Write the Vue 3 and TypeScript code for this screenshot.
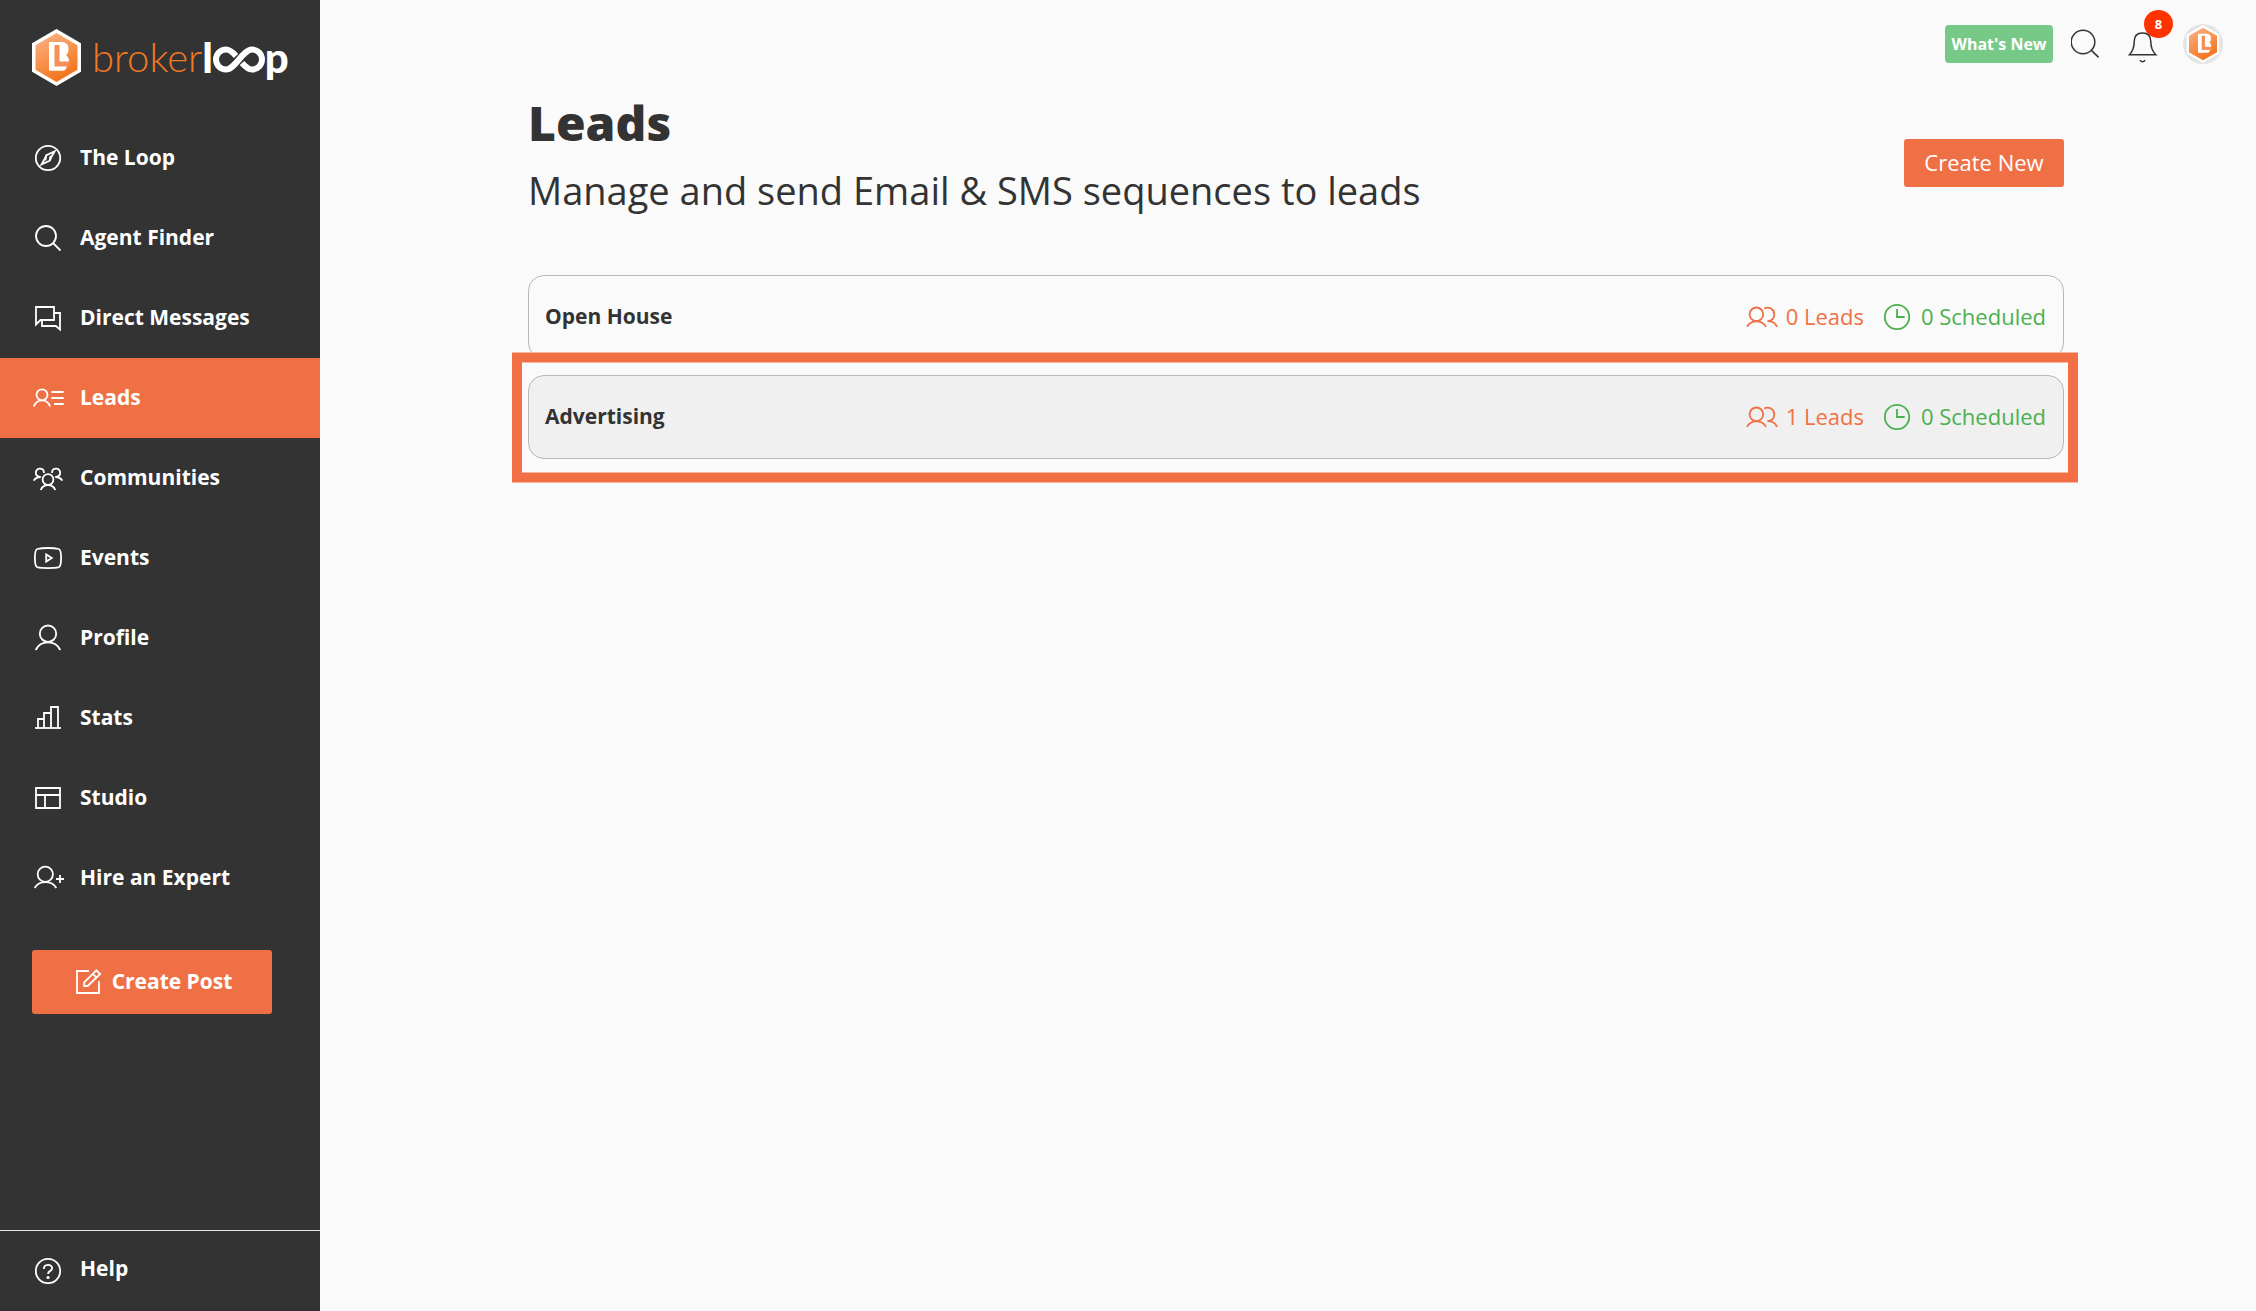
<script setup lang="ts">
interface NavItem {
  label: string
  paths: string[]
  active?: boolean
}

interface Sequence {
  name: string
  leads: number
  scheduled: number
  highlighted?: boolean
}

const navItems: NavItem[] = [
  {
    label: 'The Loop',
    paths: [
      'M28.2 16a12.2 12.2 0 1 1-24.4 0a12.2 12.2 0 1 1 24.4 0z',
      'M22.6 9.4L14.4 13.2L12.6 17L9.6 22.4L17.6 18.8L19.4 15z',
      'M14.4 13.2L13.4 18.4M17.6 18.8L18.6 13.8',
    ],
  },
  {
    label: 'Agent Finder',
    paths: ['M24 14a10 10 0 1 1-20 0a10 10 0 1 1 20 0z', 'M21 21L28.5 28.5'],
  },
  {
    label: 'Direct Messages',
    paths: ['M4 22.5V5H22V18H8.5z', 'M22 11H28V27.5L24 24H10V18.5'],
  },
  {
    label: 'Leads',
    active: true,
    paths: [
      'M15.5 12.8a5.5 5.5 0 1 1-11 0a5.5 5.5 0 1 1 11 0z',
      'M2 24.6C3 20.6 6.5 18.3 10 18.3S17 20.6 18 24.6',
      'M19.3 10H31.7M19.3 16H31.7M22 22H31.7',
    ],
  },
  {
    label: 'Communities',
    paths: [
      'M21.4 17.5a5.4 5.4 0 1 1-10.8 0a5.4 5.4 0 1 1 10.8 0z',
      'M8.7 28C10 25 13 23 16 23S22 25 23.3 28',
      'M12 11C12 5.300 3.800 5.300 3.800 10.800C3.800 13.600 5.500 14.800 8.800 15C5 15.300 2.700 16.600 1.700 18.700',
      'M20 11C20 5.300 28.200 5.300 28.200 10.800C28.200 13.600 26.500 14.800 23.200 15C27 15.300 29.300 16.600 30.300 18.700',
    ],
  },
  {
    label: 'Events',
    paths: [
      'M16 6C21 6 24.500 6.400 26.800 7C28.500 7.500 29.100 10 29.100 16S28.500 24.500 26.800 25.200C24.500 25.800 21 26.100 16 26.100S7.500 25.800 5.200 25.200C3.500 24.500 2.900 22 2.900 16S3.500 7.500 5.200 7C7.500 6.400 11 6 16 6z',
      'M14.2 12.400V19.600L19.800 16z',
    ],
  },
  {
    label: 'Profile',
    paths: [
      'M24.200 11.700a8.200 8.200 0 1 1-16.400 0a8.200 8.200 0 1 1 16.400 0z',
      'M3.700 28C6 23 11 20.300 16 20.300S26 23 28.300 28',
    ],
  },
  {
    label: 'Stats',
    paths: ['M3 26H29', 'M6 26V17H12', 'M12 26V11H19', 'M19 26V5H26V26'],
  },
  {
    label: 'Studio',
    paths: ['M4 6H28V26H4z', 'M4 13H28M13 13V26'],
  },
  {
    label: 'Hire an Expert',
    paths: [
      'M20.900 12.300a7.600 7.600 0 1 1-15.200 0a7.600 7.600 0 1 1 15.200 0z',
      'M2.700 26C5 22 9 20.200 13.300 20.200S22 22 24.300 26',
      'M24 17H32M28 13V21',
    ],
  },
]

const sequences: Sequence[] = [
  { name: 'Open House', leads: 0, scheduled: 0 },
  { name: 'Advertising', leads: 1, scheduled: 0, highlighted: true },
]
</script>

<template>
  <div class="app">
    <aside class="sidebar">
      <a class="logo" href="#" aria-label="brokerloop">
        <svg class="logo-mark" viewBox="0 0 49 57" aria-hidden="true">
          <defs>
            <linearGradient id="markFill" x1="0.2" y1="0" x2="0.6" y2="0.9">
              <stop offset="0" stop-color="#f9b183" />
              <stop offset="1" stop-color="#f47721" />
            </linearGradient>
          </defs>
          <path d="M24.500 0L49 14.300V42.700L24.500 57L0 42.700V14.300z" fill="#fff" />
          <path d="M24.500 4L45.500 16.300V40.700L24.500 53L3.500 40.700V16.300z" fill="url(#markFill)" />
          <path d="M17 13H30.500Q36.500 13.500 36.500 20Q36.500 24.500 34 26Q37 28 37 32.500L34 40Q33 41.700 31 41.700H17z" fill="#fff" />
          <path d="M22.500 16H27.500V32.500H37.500V37.500H22.500z" fill="#f69057" />
        </svg>
        <span class="wordmark">
          <span class="word-light">broker</span><span class="word-bold">l</span>
          <svg class="loop" viewBox="0 0 52 27" aria-hidden="true">
            <path d="M23 10C19.500 6 17 3.500 13 3.500A10 10 0 0 0 13 23.500C22 23.500 30 3.500 39 3.500A10 10 0 0 1 39 23.500C35 23.500 32.500 21 29 17" />
          </svg>
          <span class="word-bold">p</span>
        </span>
      </a>

      <nav class="nav">
        <a v-for="item in navItems" :key="item.label" href="#" class="nav-item" :class="{ active: item.active }">
          <svg class="icon" viewBox="0 0 32 32" aria-hidden="true">
            <path v-for="d in item.paths" :key="d" :d="d" />
          </svg>
          <span class="label">{{ item.label }}</span>
        </a>
      </nav>

      <button class="create-post" type="button">
        <svg class="icon" viewBox="0 0 32 32" aria-hidden="true">
          <path d="M17 5H5V27H27V15" />
          <path d="M24.400 4.300L28.200 8L15.600 20H12.200V16.400z" />
          <path d="M20.800 8L24.600 11.600" />
        </svg>
        <span class="label">Create Post</span>
      </button>

      <a class="nav-item help" href="#">
        <svg class="icon" viewBox="0 0 32 32" aria-hidden="true">
          <circle cx="16" cy="16" r="12.200" />
          <path d="M11.800 14C11.800 8.600 20.200 8.600 20.200 13.300C20.200 16 16 15.800 16 19" />
          <circle class="dot" cx="16" cy="22.500" r="1.600" />
        </svg>
        <span class="label">Help</span>
      </a>
    </aside>

    <main class="main">
      <div class="topbar">
        <button class="whats-new" type="button">What's New</button>
        <div class="tools">
          <button class="tool" type="button" aria-label="Search">
            <svg viewBox="0 0 32 40" aria-hidden="true">
              <circle cx="12" cy="18" r="11.800" />
              <path d="M20.400 26.400L27.600 33.400" />
            </svg>
          </button>
          <button class="tool" type="button" aria-label="Notifications">
            <svg viewBox="0 0 32 40" aria-hidden="true">
              <path d="M2.500 30.700C6 27 7.200 23.500 7.200 17.500C7.200 12 10.500 9 15.500 9S23.800 12 23.800 17.500C23.800 23.500 25 27 28.800 30.700z" />
              <path d="M13 36.300Q15.500 39.300 18.200 36.300" />
            </svg>
            <span class="badge">8</span>
          </button>
          <a class="avatar" href="#" aria-label="Account">
            <svg viewBox="0 0 49 57" aria-hidden="true">
              <path d="M24.500 0L49 14.300V42.700L24.500 57L0 42.700V14.300z" fill="#fff" />
              <path d="M24.500 4L45.500 16.300V40.700L24.500 53L3.500 40.700V16.300z" fill="url(#markFill)" />
              <path d="M17 13H30.500Q36.500 13.500 36.500 20Q36.500 24.500 34 26Q37 28 37 32.500L34 40Q33 41.700 31 41.700H17z" fill="#fff" />
              <path d="M22.500 16H27.500V32.500H37.500V37.500H22.500z" fill="#f69057" />
            </svg>
          </a>
        </div>
      </div>

      <div class="content">
        <header class="page-head">
          <div class="titles">
            <h1>Leads</h1>
            <p>Manage and send Email &amp; SMS sequences to leads</p>
          </div>
          <button class="create-new" type="button">Create New</button>
        </header>

        <ul class="list">
          <li v-for="seq in sequences" :key="seq.name" class="card" :class="{ highlighted: seq.highlighted }">
            <a class="name label" href="#">{{ seq.name }}</a>
            <span class="stat leads">
              <svg class="icon" viewBox="0 0 32 32" aria-hidden="true">
                <circle cx="10.400" cy="13.300" r="6.800" />
                <path d="M1 25.800C3 22.300 6.500 20.400 10.400 20.400S18 22.300 20 25.800" />
                <path d="M18.200 7.500C23 4.900 28.300 8.300 28.300 13.200C28.300 17.500 25.500 19.800 21.500 20.200C26.500 20.200 29.500 22.300 31 25.800" />
              </svg>
              <span class="label">{{ seq.leads }} Leads</span>
            </span>
            <span class="stat scheduled">
              <svg class="icon" viewBox="0 0 32 32" aria-hidden="true">
                <circle cx="16" cy="16" r="12.200" />
                <path d="M16 8V16H23.700" />
              </svg>
              <span class="label">{{ seq.scheduled }} Scheduled</span>
            </span>
          </li>
        </ul>
      </div>
    </main>
  </div>
</template>

<style>
body {
  margin: 0;
  background: #fafafa;
}
</style>

<style scoped>
.app {
  display: flex;
  min-height: 100vh;
  background: #fafafa;
  color: #333;
  font-family: "Open Sans", "Noto Sans", sans-serif;
}

a {
  color: inherit;
  text-decoration: none;
}

button {
  padding: 0;
  border: 0;
  font-family: inherit;
  cursor: pointer;
}

svg {
  display: block;
  flex: none;
}

.icon {
  width: 32px;
  height: 32px;
  fill: none;
  stroke: currentColor;
  stroke-width: 1.8;
}

.icon .dot {
  fill: currentColor;
  stroke: none;
}

/* Labels sit slightly above the middle of the icon beside them */
.label {
  padding-bottom: 2px;
}

.sidebar {
  display: flex;
  flex: none;
  flex-direction: column;
  width: 320px;
  background: #333;
  color: #fff;
}

.logo {
  display: flex;
  align-items: center;
  gap: 11px;
  height: 57px;
  padding: 29px 0 32px 32px;
}

.logo-mark {
  width: 49px;
  height: 57px;
}

.wordmark {
  display: flex;
  align-items: center;
  padding-bottom: 2px;
  font-family: Lato, sans-serif;
  font-size: 40px;
  line-height: 56px;
}

.word-light {
  color: #f47721;
  font-weight: 300;
}

.word-bold {
  font-size: 42px;
  font-weight: 900;
}

.loop {
  width: 52px;
  height: 27px;
  margin-top: 5px;
  fill: none;
  stroke: #fff;
  stroke-width: 6;
}

.nav {
  display: flex;
  flex-direction: column;
}

.nav-item {
  display: flex;
  align-items: center;
  gap: 16px;
  height: 80px;
  padding-left: 32px;
  font-size: 21px;
  font-weight: 700;
}

.nav-item.active {
  background: #f07046;
}

.create-post {
  display: flex;
  align-items: center;
  justify-content: center;
  gap: 8px;
  width: 240px;
  height: 64px;
  margin: 32px;
  border-radius: 3px;
  background: #f07046;
  color: #fff;
  font-size: 21px;
  font-weight: 700;
}

.help {
  margin-top: auto;
  border-top: 1px solid #e6e6e6;
}

.help .label {
  padding-bottom: 6px;
}

.main {
  flex: 1;
  min-width: 0;
}

.topbar {
  display: flex;
  align-items: center;
  justify-content: flex-end;
  gap: 18px;
  height: 40px;
  padding: 24px 33px 29px 0;
}

.whats-new {
  width: 108px;
  height: 38px;
  border-radius: 4px;
  background: #76c987;
  color: #fff;
  font-size: 16px;
  font-weight: 700;
}

.tools {
  display: flex;
  gap: 24px;
}

.tool {
  position: relative;
  background: none;
}

.tool svg {
  width: 32px;
  height: 40px;
  fill: none;
  stroke: #333;
  stroke-width: 1.5;
}

.badge {
  position: absolute;
  top: -14px;
  left: 17px;
  width: 29px;
  height: 28px;
  border-radius: 50%;
  background: #f30;
  color: #fff;
  font-size: 13px;
  font-weight: 700;
  line-height: 28px;
  text-align: center;
}

.avatar {
  display: flex;
  align-items: center;
  justify-content: center;
  width: 40px;
  height: 40px;
  border-radius: 50%;
  background: #e4e4e4;
}

.avatar svg {
  width: 34px;
  height: 38px;
}

.content {
  padding: 0 192px 64px 208px;
}

.page-head {
  display: flex;
  align-items: center;
  justify-content: space-between;
}

.titles {
  padding-bottom: 18px;
}

h1 {
  margin: 0 0 13px;
  font-size: 48px;
  font-weight: 800;
  line-height: 60px;
}

p {
  margin: 0;
  font-size: 38px;
  line-height: 48px;
}

.create-new {
  width: 160px;
  height: 48px;
  padding-bottom: 2px;
  border-radius: 3px;
  background: #f07046;
  color: #fff;
  font-size: 22px;
}

.list {
  display: flex;
  flex-direction: column;
  gap: 16px;
  margin: 43px 0 0;
  padding: 0;
  list-style: none;
}

.card {
  position: relative;
  display: flex;
  align-items: center;
  gap: 17px;
  box-sizing: border-box;
  height: 84px;
  padding: 0 17px 0 16px;
  border: 1px solid #b8b8b8;
  border-radius: 16px;
}

.card.highlighted {
  background: #f0f0f0;
}

.card.highlighted::after {
  content: "";
  position: absolute;
  inset: -23px -15px -24px -17px;
  border: solid #f37046;
  border-width: 9px 10px;
  box-shadow: 0 1px #f9b8a2, 0 -1px #f9b8a2, inset 0 1px #f9b8a2, inset 0 -1px #f9b8a2;
  pointer-events: none;
}

.name {
  flex: 1;
  font-size: 21px;
  font-weight: 700;
}

.stat {
  display: flex;
  align-items: center;
  gap: 8px;
  font-size: 22px;
}

.leads {
  color: #f07046;
}

.scheduled {
  color: #4caf50;
}
</style>
